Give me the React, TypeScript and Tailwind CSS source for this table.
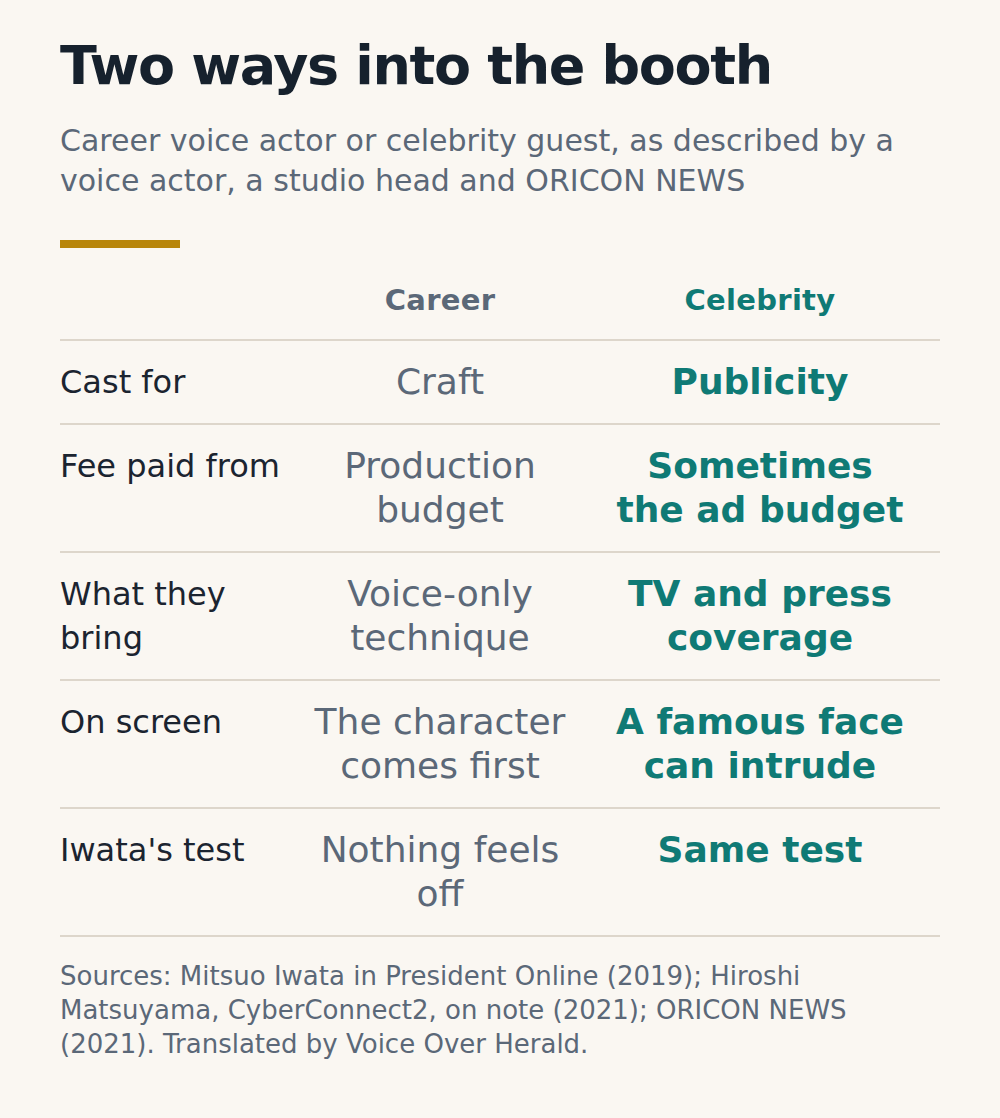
import React from "react";

const rows: { label: string; career: string; celeb: string }[] = [
  { label: "Cast for", career: "Craft", celeb: "Publicity" },
  { label: "Fee paid from", career: "Production budget", celeb: "Sometimes the ad budget" },
  { label: "What they bring", career: "Voice-only technique", celeb: "TV and press coverage" },
  { label: "On screen", career: "The character comes first", celeb: "A famous face can intrude" },
  { label: "Iwata's test", career: "Nothing feels off", celeb: "Same test" },
];

export default function App() {
  return (
    <div
      className="min-h-[1118px] w-full bg-[#faf7f2] px-[60px] pt-[34px] pb-[57px]"
      style={{ fontFamily: '"DejaVu Sans", "Noto Sans", sans-serif' }}
    >
      <h1 className="text-[54px] leading-[64px] font-bold text-[#16212d] tracking-[-0.025em]">
        Two ways into the booth
      </h1>
      <p className="mt-[23px] text-[30px] leading-[40px] text-[#5b6878]">
        Career voice actor or celebrity guest, as described by a voice actor, a studio head and ORICON NEWS
      </p>
      <div className="mt-[39px] h-[8px] w-[120px] bg-[#b8860b]" />

      <div className="mt-[32px] w-[880px]">
        <div className="grid grid-cols-[230px_300px_340px] pb-[19px] border-b-2 border-[#ddd6cb]">
          <div />
          <div className="text-center text-[29px] leading-[40px] font-bold text-[#5b6878] tracking-[0.01em]">
            Career
          </div>
          <div className="text-center text-[29px] leading-[40px] font-bold text-[#0f7a75] tracking-[0.01em]">
            Celebrity
          </div>
        </div>
        {rows.map((r) => (
          <div
            key={r.label}
            className="grid grid-cols-[230px_300px_340px] py-[19px] border-b-2 border-[#ddd6cb]"
          >
            <div className="text-[32px] leading-[44px] text-[#1b2430]">{r.label}</div>
            <div className="px-[6px] text-center text-[36px] leading-[44px] text-[#5b6878]">{r.career}</div>
            <div className="px-[20px] text-center text-[36px] leading-[44px] font-bold text-[#0f7a75]">
              {r.celeb}
            </div>
          </div>
        ))}
      </div>

      <p className="mt-[22px] w-[800px] text-[26px] leading-[34px] text-[#5b6878]">
        Sources: Mitsuo Iwata in President Online (2019); Hiroshi Matsuyama, CyberConnect2, on note (2021); ORICON NEWS (2021). Translated by Voice Over Herald.
      </p>
    </div>
  );
}
